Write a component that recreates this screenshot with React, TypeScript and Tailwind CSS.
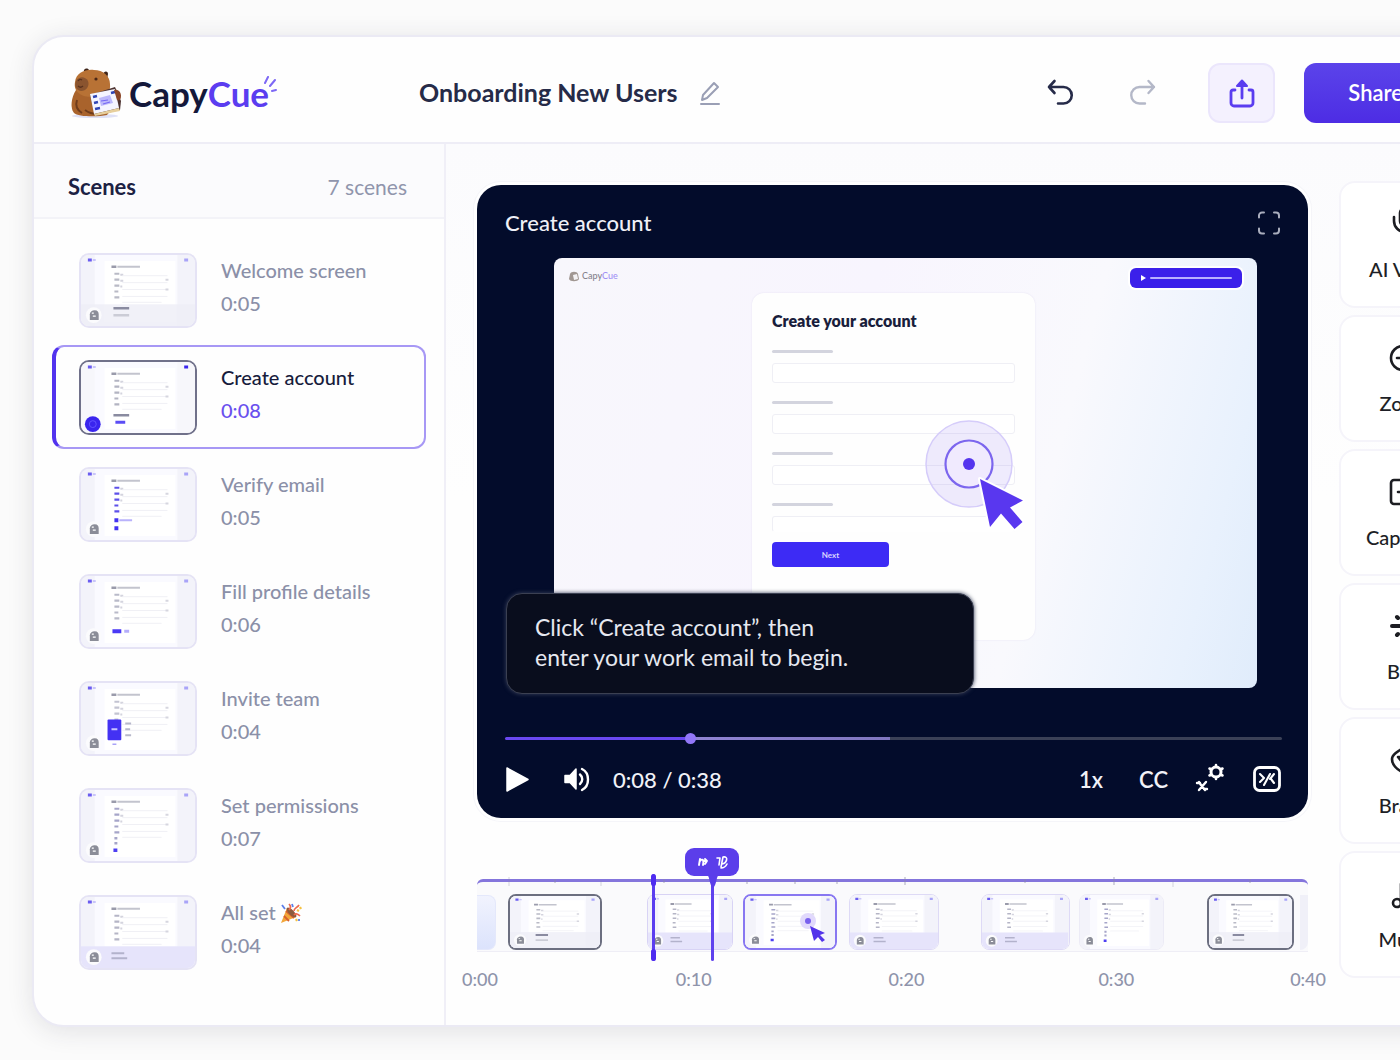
import type { ReactNode } from "react";
import { clsx } from "clsx";

type ThumbKind = "welcome" | "create" | "verify" | "profile" | "invite" | "permissions" | "done";

type Scene = {
  title: string;
  time: string;
  kind: ThumbKind;
  party?: boolean;
};

const scenes: Scene[] = [
  { title: "Welcome screen", time: "0:05", kind: "welcome" },
  { title: "Create account", time: "0:08", kind: "create" },
  { title: "Verify email", time: "0:05", kind: "verify" },
  { title: "Fill profile details", time: "0:06", kind: "profile" },
  { title: "Invite team", time: "0:04", kind: "invite" },
  { title: "Set permissions", time: "0:07", kind: "permissions" },
  { title: "All set", time: "0:04", kind: "done", party: true },
];

const fields = ["Full name", "Work email", "Company", "Password"];

function CapyMark({ className }: { className?: string }) {
  return (
    <svg viewBox="0 0 52 52" className={className} aria-hidden="true">
      <ellipse cx="25" cy="49" rx="23" ry="2" fill="#c9cdf0" opacity=".6" />
      <path d="M14 5c-1-3 3-5 5-2l1 3zM33 8c0-4 5-5 5-1l-1 5z" fill="#3f2418" />
      <path d="M6 23C1 31 0 41 4 46c4 4 24 4 33 2 6-6 6-17 1-23-6-5-26-8-32-2z" fill="#a9632c" />
      <path d="M5 15C6 6 15 2 24 3c9 0 16 6 16 14 1 8-4 13-14 13C13 31 3 26 5 15z" fill="#b87235" />
      <path d="M6 14c3-5 9-5 12 0 2 5-2 10-7 10-5-1-7-5-5-10z" fill="#8a542f" />
      <path d="M8 14c1-2 3-2 4-1M13 19c-2 2-4 1-5 0" stroke="#5a321d" strokeWidth="1.3" fill="none" />
      <circle cx="26" cy="12" r="1.6" fill="#4a2716" />
      <path d="M7 33c-2 6 0 10 5 13M15 43c5 4 9 4 13 4" stroke="#6f3c1c" strokeWidth="2" fill="none" />
      <path d="M20 28l25-8 6 14-1 9-25 6z" fill="#4c3230" />
      <path d="M20 27l25-5 4 19-25 6z" fill="#f5f5ff" />
      <path d="M24 47l25-6 1 3-25 5z" fill="#e7cf9c" />
      <path d="M23 30l4-1M24 36l4-1M25 42l5-1M41 26l4-1" stroke="#3145b5" strokeWidth="2.4" />
      <path d="M29 31l11-3 3 8-12 3z" fill="#bcb8fb" />
      <path d="M31 34l7-1M33 37l7-2" stroke="#7668f4" strokeWidth="1.2" />
      <path d="M44 23c4-1 7 2 7 6s-2 5-4 4" fill="#8c4729" />
    </svg>
  );
}

function Party() {
  return (
    <svg viewBox="0 0 22 22" className="ml-1 h-[22px] w-[22px]" role="img" aria-label="Party popper">
      <path d="M1 21L7 6l9 9z" fill="#f2a63a" />
      <path d="M4 14l5 5M6 9l8 7" stroke="#d8602d" strokeWidth="1.8" />
      <ellipse cx="11.500" cy="10.500" rx="6.500" ry="2.600" transform="rotate(45 11.500 10.500)" fill="#8c5b3d" />
      <path d="M9 8c2-2 2-4 0-6M14 9c0-3 3-3 5-6M14 13c2-2 4-1 6 1" stroke="#ee6a4d" strokeWidth="1.700" fill="none" />
      <path d="M2 3l3 4M12 2l1 3M19 17v2" stroke="#5d7fe8" strokeWidth="1.800" />
      <path d="M17 8l2 1M16 17l1 2M20 5l1 2" stroke="#f5c242" strokeWidth="2.200" />
    </svg>
  );
}

const rowMarks: Record<ThumbKind, string> = {
  welcome: "#b9bac6",
  create: "#b3b4c2",
  verify: "#5d50ea",
  profile: "#b9bac9",
  invite: "#c3c4d2",
  permissions: "#a6a5c9",
  done: "#b5b5c6",
};

function Thumb({ kind, className }: { kind: ThumbKind; className?: string }) {
  const mark = rowMarks[kind];
  const done = kind === "done";
  const badge = kind === "create" ? "#3a25ee" : "#8b8d98";
  return (
    <svg viewBox="0 0 116 72" preserveAspectRatio="none" className={clsx("block bg-[#f4f4fa]", className)} aria-hidden="true">
      <rect width="116" height="72" fill={kind === "create" ? "#f7f7fb" : "#f3f3fa"} />
      <rect x="14" width="84" height="72" fill="#fafaff" />
      <rect x="24" y="6" width="72" height={done ? 46 : 62} fill="#fff" />
      {(done || kind === "welcome") && (
        <rect y="50" width="116" height="22" fill={done ? "#e6e4fb" : "#eeeef6"} opacity={done ? 1 : 0.8} />
      )}
      <path d="M7 5h4" stroke="#6a5cf0" strokeWidth="3" />
      <path d="M12 5h3" stroke="#c9c5fa" strokeWidth="2" />
      <path d="M105 5h4" stroke={kind === "create" ? "#3a25ee" : "#a9a4f8"} strokeWidth="3" />
      <path d="M31 12h5" stroke="#9a9bab" strokeWidth="2.500" />
      <path d="M37 12h23" stroke="#c3c4ce" strokeWidth="2" />
      <path d="M34 19h5M34 25h5M34 31h5M34 37h4M34 43h5" stroke={mark} strokeWidth="2.200" />
      <path d="M40 20h3M40 32h2M40 26h3" stroke="#d4d4de" strokeWidth="2" />
      <path d="M42 21h46M42 28h46M42 35h46M42 42h46M42 48h40" stroke="#f0f0f5" strokeWidth="1" />
      <path d="M86 25h3M86 35h3" stroke="#d6d6df" strokeWidth="2" />
      {kind === "verify" && <path d="M34 52h4M34 60h4" stroke="#4232f2" strokeWidth="4" />}
      {kind === "verify" && <path d="M39 52h13" stroke="#b9b2fb" strokeWidth="2" />}
      {(kind === "create" || kind === "welcome") && <path d="M33 54h16" stroke="#8a8ba0" strokeWidth="2.500" />}
      {kind === "create" && <path d="M35 61h10" stroke="#5b4df5" strokeWidth="3" />}
      {kind === "welcome" && <path d="M33 61h16" stroke="#cbccd6" strokeWidth="2.500" />}
      {kind === "profile" && <path d="M32 56h9" stroke="#4a39f5" strokeWidth="4" />}
      {kind === "profile" && <path d="M44 56h5" stroke="#b5aefa" strokeWidth="3" />}
      {kind === "invite" && (
        <g>
          <rect x="27" y="37" width="14" height="21" rx="1" fill="#4331f3" />
          <path d="M31 47h6" stroke="#c9c4ff" strokeWidth="2" />
          <path d="M45 41h6M45 47h5M45 53h6" stroke="#b7b8cb" strokeWidth="2" />
          <path d="M32 62h4" stroke="#a9a3f7" strokeWidth="1.500" />
        </g>
      )}
      {kind === "permissions" && <path d="M33 61h4" stroke="#4e3ff2" strokeWidth="3.500" />}
      {kind === "permissions" && <path d="M34 49h3M34 54h3" stroke={mark} strokeWidth="2.500" />}
      {done && <path d="M31 57h13M31 62h16" stroke="#b3b2cc" strokeWidth="2" />}
      {kind === "create" ? (
        <g>
          <circle cx="12" cy="63" r="8" fill={badge} />
          <circle cx="12" cy="63" r="3.500" fill="none" stroke="#6353ff" />
        </g>
      ) : (
        <g>
          <circle cx="13" cy="61" r="8" fill="#fbfbfd" />
          <path d="M9 66v-6c0-2 2-4 5-4s4 2 4 4v6z" fill={badge} />
          <path d="M12 62h3M11 59h2" stroke="#fff" strokeWidth="1.300" />
        </g>
      )}
    </svg>
  );
}

function Header() {
  return (
    <header className="flex h-[107px] items-center border-b-2 border-[#eeedf6] pt-[6px] pr-[51px] pl-9">
      <a href="#" className="flex w-[349px] items-center" aria-label="CapyCue home">
        <CapyMark className="h-[52px] w-[52px]" />
        <span className="ml-[7px] text-[35px] leading-10 font-bold text-[#14183a]">
          Capy<span className="text-[#5b3df0]">Cue</span>
        </span>
        <svg viewBox="0 0 16 18" className="-ml-[7px] h-[18px] w-4 -translate-y-2" fill="none" stroke="#7d68f5" strokeWidth="2" strokeLinecap="round" aria-hidden="true">
          <path d="M3 7l3-6M8 10l5-6M10 15l4-1" />
        </svg>
      </a>
      <h1 className="text-[25px] font-bold text-[#262b48]">Onboarding New Users</h1>
      <button type="button" aria-label="Rename project" className="ml-5">
        <svg viewBox="0 0 24 26" className="h-[26px] w-6" fill="none" stroke="#9a9fb5" strokeWidth="2" strokeLinejoin="round" strokeLinecap="round">
          <path d="M5 15L16 3l4 4L9 18l-5 2zM3 24h18" />
        </svg>
      </button>
      <div className="ml-auto flex items-center">
        <button type="button" aria-label="Undo">
          <svg viewBox="0 0 30 30" className="h-[30px] w-[30px]" fill="none" stroke="#262b49" strokeWidth="2.600" strokeLinecap="round" strokeLinejoin="round">
            <path d="M8.500 3L3 9l5.500 6M3 9h14.500a8 8 0 0 1 0 16.500H12" />
          </svg>
        </button>
        <button type="button" aria-label="Redo" className="ml-[51px]">
          <svg viewBox="0 0 30 30" className="h-[30px] w-[30px]" fill="none" stroke="#b4b8c8" strokeWidth="2.400" strokeLinecap="round" strokeLinejoin="round">
            <path d="M21.500 3L27 9l-5.500 6M27 9H12.500a8 8 0 0 0 0 16.500H18" />
          </svg>
        </button>
        <button type="button" aria-label="Export" className="ml-[51px] flex h-[60px] w-[67px] items-center justify-center rounded-xl border-2 border-[#ebe6fc] bg-[#f4f1fe]">
          <svg viewBox="0 0 30 32" className="h-8 w-[30px]" fill="none" stroke="#5a3df0" strokeWidth="2.800" strokeLinecap="round" strokeLinejoin="round">
            <path d="M8 13H6a2 2 0 0 0-2 2v11a3 3 0 0 0 3 3h16a3 3 0 0 0 3-3V15a2 2 0 0 0-2-2h-2M15 8v13" />
            <path d="M15 3.500l5 5.500H10z" fill="#5a3df0" strokeWidth="2" />
          </svg>
        </button>
        <button type="button" className="ml-[29px] h-[60px] rounded-xl bg-linear-to-b from-[#5b43ea] to-[#4d2ce4] px-11 text-[22px] font-semibold text-white">
          Share
        </button>
      </div>
    </header>
  );
}

function Sidebar() {
  return (
    <aside className="w-[412px] shrink-0 border-r-2 border-[#f0eff7]">
      <div className="flex h-[75px] items-center justify-between border-b-2 border-[#f3f3f8] bg-[#fbfbfd] pt-3 pr-[37px] pl-[34px]">
        <h2 className="text-[22px] font-bold text-[#1c2143]">Scenes</h2>
        <span className="text-[21px] text-[#9095ac]">7 scenes</span>
      </div>
      <ul className="flex flex-col gap-[3px] px-[18px] pt-[19px] pb-8">
        {scenes.map((scene) => {
          const active = scene.kind === "create";
          return (
            <li key={scene.title}>
              <button
                type="button"
                aria-current={active}
                className={clsx(
                  "flex h-[104px] w-full items-center rounded-xl border-2 border-l-4 pl-[23px] text-left",
                  active ? "border-[#a798f5] border-l-[#5233ee]" : "border-transparent"
                )}
              >
                <Thumb
                  kind={scene.kind}
                  className={clsx(
                    "h-[75px] w-[118px] rounded-[10px] border-2",
                    active ? "border-[#70718a]" : "border-[#e5e3f5]"
                  )}
                />
                <span className="ml-6 flex flex-col pb-[6px] text-xl leading-[33px]">
                  <span className={clsx("flex items-center font-medium", active ? "text-[#171c3c]" : "text-[#8b90a8]")}>
                    {scene.title}
                    {scene.party && <Party />}
                  </span>
                  <span className={clsx("font-medium", active ? "text-[#6a50ee]" : "text-[#8b90a8]")}>{scene.time}</span>
                </span>
              </button>
            </li>
          );
        })}
      </ul>
    </aside>
  );
}

function Pointer() {
  return (
    <svg viewBox="0 0 110 120" className="absolute top-[122px] left-[168px] h-[120px] w-[110px]" aria-hidden="true">
      <circle cx="49" cy="49" r="43" fill="#7d5df0" fillOpacity=".12" stroke="#d5ccfa" strokeWidth="1.500" />
      <circle cx="49" cy="49" r="23.500" fill="#f0eafe" stroke="#7c66ee" strokeWidth="2.200" />
      <circle cx="49" cy="49" r="6" fill="#5535ee" />
      <path
        d="M60 64L103 85.500 90 92.500 102.500 107 94.500 114 81 98.500 70 112z"
        fill="#5937ef"
        stroke="#fff"
        strokeWidth="4"
        strokeLinejoin="round"
        paintOrder="stroke"
      />
    </svg>
  );
}

function Screen() {
  return (
    <div className="mt-[21px] mr-[25px] ml-[49px] rounded-lg bg-[linear-gradient(105deg,#f8f7fc_0%,#f8f5fe_40%,#f9f9fd_68%,#e8f1fd_90%,#e0ecfb_100%)] pt-[10px] pb-12">
      <div className="flex h-5 items-center justify-between pr-[15px] pl-[14px]">
        <span className="flex items-center pb-1 text-[9px] leading-3 font-medium text-[#85828d]">
          <svg viewBox="0 0 12 12" className="mr-[2px] h-3 w-3" aria-hidden="true">
            <path d="M2 4c1-3 7-3 8 0l1 5c-1 3-9 3-10 0z" fill="#a19792" />
            <path d="M5 5l4-1 1 5-4 1z" fill="#f4f2f4" />
          </svg>
          Capy<span className="text-[#a08ff5]">Cue</span>
        </span>
        <button type="button" aria-label="Start recording" className="flex h-5 w-[112px] items-center gap-1 rounded-md bg-[#3b20ea] px-[10px] shadow-[0_0_0_2px_#fff]">
          <svg viewBox="0 0 6 8" className="h-2 w-[6px]" fill="#fff" aria-hidden="true">
            <path d="M1 1l5 3-5 3z" />
          </svg>
          <span className="h-[2px] flex-1 rounded bg-[#b9b0ff]" />
        </button>
      </div>
      <div className="mt-[5px] flex justify-center pr-6">
        <div className="relative w-[283px] rounded-xl bg-[#fefefe] px-5 pt-[18px] pb-[73px] shadow-[0_0_2px_#e4e1f2]">
          <h3 className="text-base leading-5 font-extrabold text-[#1a1e3c]">Create your account</h3>
          <div className="mt-[19px] flex flex-col gap-[18px]">
            {fields.map((field) => (
              <label key={field} className="flex w-[243px] flex-col gap-[10px]">
                <span className="h-[3px] w-[61px] rounded bg-[#d3d4de]" />
                <input
                  type="text"
                  aria-label={field}
                  className={clsx("w-full rounded-[3px] border border-[#efeff5] bg-white", field === "Password" ? "h-4 border-b-transparent" : "h-5")}
                />
              </label>
            ))}
          </div>
          <button type="button" className="mt-[10px] flex h-[25px] w-[117px] items-center justify-center rounded bg-[#3d2bf5] text-[8px] font-bold text-[#d9d5ff]">
            Next
          </button>
          <Pointer />
        </div>
      </div>
    </div>
  );
}

function Player() {
  return (
    <section aria-label="Preview" className="relative rounded-3xl bg-[#030c2b] pt-6 pr-[26px] pb-[21px] pl-7 shadow-[0_0_0_3px_#fff,0_0_0_4px_#f5f5f9]">
      <div className="flex h-7 items-center justify-between">
        <h2 className="pb-[2px] text-[22px] font-medium text-[#eff0f7]">Create account</h2>
        <button type="button" aria-label="Full screen">
          <svg viewBox="0 0 26 26" className="h-[26px] w-[26px]" fill="none" stroke="#a9adbd" strokeWidth="2" strokeLinecap="round">
            <path d="M3 7.500V5.500a3 3 0 0 1 3-3h2M18 2.500h2a3 3 0 0 1 3 3v2M23 18.500v2a3 3 0 0 1-3 3h-2M8 23.500H6a3 3 0 0 1-3-3v-2" />
          </svg>
        </button>
      </div>
      <Screen />
      <p className="absolute bottom-[124px] left-[29px] w-[468px] rounded-2xl border border-[#3b4052] bg-[#090d1d] px-7 pt-[18px] pb-[21px] text-[23px] leading-[30px] text-[#e6e8f0] shadow-[0_0_4px_#39405a]">
        Click “Create account”, then
        <br />
        enter your work email to begin.
      </p>
      <input
        type="range"
        min="0"
        max="1000"
        defaultValue="235"
        aria-label="Seek"
        className="mt-[49px] block h-[3px] w-full appearance-none rounded bg-[linear-gradient(90deg,#6a48f0_0%,#6a48f0_24%,#9084d4_24%,#8077c0_49.5%,#3b4157_49.5%,#3b4157_100%)] [&::-webkit-slider-thumb]:h-[11px] [&::-webkit-slider-thumb]:w-[11px] [&::-webkit-slider-thumb]:appearance-none [&::-webkit-slider-thumb]:rounded-full [&::-webkit-slider-thumb]:bg-[#9277f8]"
      />
      <div className="mt-[21px] flex h-9 items-center text-[22px] font-medium text-[#f1f2f8]">
        <button type="button" aria-label="Play">
          <svg viewBox="0 0 26 28" className="h-7 w-[26px]" fill="#fff" stroke="#fff" strokeWidth="1.500" strokeLinejoin="round">
            <path d="M2 3l21 11.500L2 26z" />
          </svg>
        </button>
        <button type="button" aria-label="Mute" className="ml-8">
          <svg viewBox="0 0 28 28" className="h-7 w-7" fill="none" stroke="#fff" strokeWidth="2.400" strokeLinecap="round">
            <path d="M2 10.500h5L13 4v20l-6-6.500H2z" fill="#fff" strokeWidth="1.500" strokeLinejoin="round" />
            <path d="M17 9.500c3 2.500 3 7 0 9.500M19 4c8 4 8 17 0 21" />
          </svg>
        </button>
        <span className="ml-[22px]">0:08 / 0:38</span>
        <button type="button" className="ml-auto font-semibold">1x</button>
        <button type="button" className="ml-9 font-semibold">CC</button>
        <button type="button" aria-label="Settings" className="ml-[26px]">
          <svg viewBox="0 0 32 36" className="h-9 w-8" fill="none" stroke="#fff" strokeWidth="2.400" strokeLinecap="round" strokeLinejoin="round">
            <circle cx="22" cy="11" r="5" strokeWidth="3" />
            <path d="M22 4v1M28.500 7.500l-1 .5M28.500 14.500l-1-.5M22 18v-1M15.500 14.500l1-.5M15.500 7.500l1 .5" strokeWidth="2.600" />
            <path d="M5 21l2 3 4 5M12 21l-7 8M3 22h3M10 28h3" />
          </svg>
        </button>
        <button type="button" aria-label="Shortcuts" className="ml-[26px]">
          <svg viewBox="0 0 30 28" className="h-7 w-[30px]" fill="none" stroke="#fff" strokeLinecap="round" strokeLinejoin="round">
            <rect x="2.500" y="2.500" width="25" height="23" rx="5" strokeWidth="2.800" />
            <path d="M8 9l4 4-4 4M18 9l-6 11M18 14l4-5M19 14l3 4" strokeWidth="2.100" />
          </svg>
        </button>
      </div>
    </section>
  );
}

type Clip = { kind: ThumbKind; className: string; pointer?: boolean };

const clips: Clip[] = [
  { kind: "welcome", className: "ml-3 flex-93 border-2 border-[#6c6f80]" },
  { kind: "done", className: "ml-[45px] flex-87 border border-[#d8d3f5]" },
  { kind: "permissions", className: "ml-[10px] flex-93 border-2 border-[#8877f1]", pointer: true },
  { kind: "done", className: "ml-3 flex-91 border border-[#dedaf6]" },
  { kind: "done", className: "ml-[42px] flex-89 border border-[#dedaf6]" },
  { kind: "permissions", className: "ml-[9px] flex-86 border border-[#ecebf6]" },
  { kind: "welcome", className: "ml-[43px] flex-86 border-2 border-[#6c6f80]" },
];

function Timeline() {
  return (
    <section aria-label="Timeline" className="mt-[61px]">
      <div className="relative flex h-[73px] items-end rounded-t-md border-t-[3px] border-b border-t-[#8475dc] border-b-[#efeef6] bg-[#fafafc] pb-px">
        <svg viewBox="0 0 831 12" preserveAspectRatio="none" className="absolute -top-[6px] left-0 h-3 w-full" stroke="#8b8aa8" strokeWidth="1" aria-hidden="true">
          <path d="M78 3v4M187 3v4M270 4v4M318 4v4M360 4v4M548 3v4M773 3v4M428 1v8M637 1v8" opacity=".7" />
          <path d="M32 1v9M124 4v6M696 4v7" opacity=".35" />
        </svg>
        <span className="h-[55px] w-[19px] rounded-r-lg border border-l-0 border-[#e4e8fb] bg-linear-to-b from-[#f1f3fe] to-[#dce3fc]" />
        {clips.map((clip, i) => (
          <div key={i} className={clsx("relative h-14 min-w-0 basis-0 overflow-hidden rounded-lg", clip.className)}>
            <Thumb kind={clip.kind} className="h-full w-full" />
            {clip.pointer && (
              <svg viewBox="0 0 30 34" className="absolute top-3 right-2 h-[34px] w-[30px]" aria-hidden="true">
                <circle cx="11" cy="13" r="8" fill="#e1d9fc" />
                <circle cx="11" cy="13" r="3" fill="#7960ee" />
                <path d="M13 18l15 7-5 2 5 5-3 2-4-5-4 4z" fill="#5434ea" />
              </svg>
            )}
          </div>
        ))}
        <span className="ml-[6px] h-[55px] w-2 rounded-br-lg bg-[#f0f0f8]" />
        <span className="absolute top-[-8px] bottom-[-10px] left-[21%] w-[3px] rounded bg-[#5a3df0]" />
        <span className="absolute top-[-8px] left-[21%] h-3 w-[5px] -translate-x-px rounded-full bg-[#4e2cf0]" />
        <span className="absolute bottom-[-10px] left-[21%] h-3 w-[5px] -translate-x-px rounded-full bg-[#4e2cf0]" />
        <span className="absolute top-[-3px] bottom-[-10px] left-[28%] w-[3px] translate-x-px rounded bg-[#5f42ee]" />
        <span className="absolute top-[-34px] left-[25%] flex h-7 w-[54px] items-center justify-center rounded-[9px] bg-[#5b3eea]">
          <svg viewBox="0 0 36 18" className="h-[18px] w-9" fill="none" stroke="#fff" strokeWidth="1.900" strokeLinecap="round" strokeLinejoin="round" aria-hidden="true">
            <path d="M5 12l1-6M6 8c3-3 4-1 3 4M9 8h4M11 6l2 2-2 3" />
            <path d="M23 5h3l-1 7M27 14l2-10c6-1 4 6-1 7M27 15c3 0 5-2 6-4" strokeWidth="1.600" />
          </svg>
        </span>
        <svg viewBox="0 0 12 14" className="absolute top-[-7px] left-[28%] h-[14px] w-3 -translate-x-[3px]" fill="#5b3eea" aria-hidden="true">
          <path d="M0 0h12c-3 1-2 10-6 13C2 10 3 1 0 0z" />
        </svg>
      </div>
      <div className="-mr-[18px] -ml-[15px] mt-[15px] grid grid-cols-[213fr_212fr_209fr_191fr_auto] text-lg leading-6 font-medium text-[#8f94ab]">
        <span>0:00</span>
        <span>0:10</span>
        <span>0:20</span>
        <span>0:30</span>
        <span>0:40</span>
      </div>
    </section>
  );
}

const tools: { label: string; icon: ReactNode }[] = [
  {
    label: "AI Voice",
    icon: (
      <>
        <rect x="13" y="0" width="10" height="18" rx="5" />
        <path d="M7 9v4a11 11 0 0 0 22 0V9M18 24v6" />
      </>
    ),
  },
  {
    label: "Zoom",
    icon: (
      <>
        <circle cx="16" cy="16" r="12" />
        <path d="M25 25l7 7M10 16h12M16 10v12" />
      </>
    ),
  },
  {
    label: "Captions",
    icon: (
      <>
        <rect x="4" y="4" width="28" height="24" rx="3" />
        <path d="M11 16h7M23 16h4" />
      </>
    ),
  },
  {
    label: "Blur",
    icon: (
      <path d="M5 16h8M23 16h8M10 7l1 1M10 25l1-1M26 7l-1 1M26 25l-1-1M18 4v7M18 21v7" strokeWidth="4" />
    ),
  },
  {
    label: "Brand",
    icon: (
      <>
        <path d="M18 3c-5 3-13 7-13 12 0 5 4 11 13 14 9-3 13-9 13-14 0-5-8-9-13-12z" />
        <path d="M11 13l5 6v-6z" fill="#1c1d22" />
      </>
    ),
  },
  {
    label: "Music",
    icon: (
      <>
        <circle cx="10" cy="25" r="4" />
        <circle cx="26" cy="22" r="4" />
        <path d="M14 25V6l16-3v19M14 12l16-3" />
      </>
    ),
  },
];

function Tools() {
  return (
    <nav aria-label="Tools" className="flex w-[132px] shrink-0 flex-col gap-[7px]">
      {tools.map((tool) => (
        <button
          key={tool.label}
          type="button"
          className="flex h-[127px] flex-col items-center rounded-2xl border-2 border-[#f5f4fa] bg-white pt-[25px] text-xl leading-6 font-medium text-[#1e1f26]"
        >
          <svg viewBox="0 0 36 36" className="h-9 w-9" fill="none" stroke="#1c1d22" strokeWidth="2.600" strokeLinecap="round" strokeLinejoin="round" aria-hidden="true">
            {tool.icon}
          </svg>
          <span className="mt-[13px]">{tool.label}</span>
        </button>
      ))}
    </nav>
  );
}

export default function App() {
  return (
    <div className="min-h-screen overflow-hidden bg-[#fbfbfb] pt-[35px] pb-[33px] pl-8 font-['Lato',sans-serif]">
      <div className="-mr-[100px] flex min-h-[calc(100vh-68px)] flex-col overflow-hidden rounded-[32px] border-2 border-[#ebeaf4] bg-[#fefefe] shadow-[0_4px_26px_rgba(40,40,60,0.12)]">
        <Header />
        <div className="flex flex-1">
          <Sidebar />
          <div className="flex min-w-0 flex-1 items-start gap-[31px] bg-linear-to-b from-[#fbfbfd] to-[#fefefe] to-40% pr-[27px] pl-[31px]">
            <main className="min-w-0 flex-1 pt-[41px]">
              <Player />
              <Timeline />
            </main>
            <div className="pt-[37px]">
              <Tools />
            </div>
          </div>
        </div>
      </div>
    </div>
  );
}
